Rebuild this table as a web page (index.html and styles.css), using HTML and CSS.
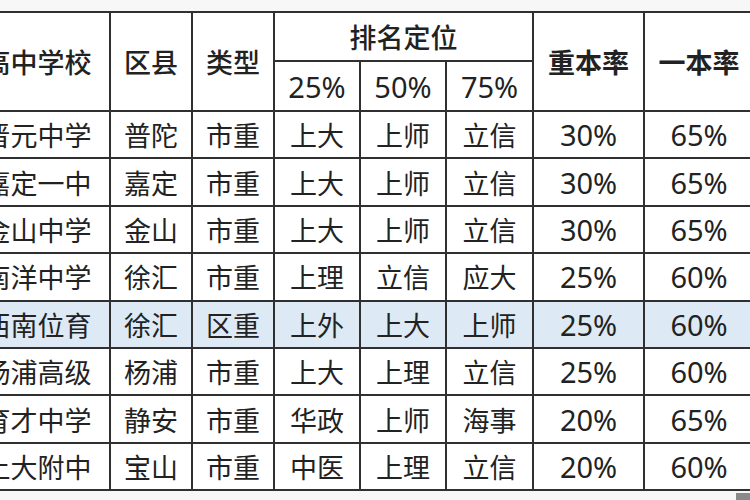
FILE: index.html
```html
<!DOCTYPE html>
<html lang="zh">
<head>
<meta charset="utf-8">
<link rel="stylesheet" href="styles.css">
</head>
<body>
<div class="page">
<table class="grid">
  <colgroup>
    <col class="c-school"><col class="c-dist"><col class="c-type">
    <col class="c-rank"><col class="c-rank"><col class="c-rank6">
    <col class="c-key"><col class="c-one">
  </colgroup>
  <thead>
    <tr class="h1">
      <th rowspan="2">高中学校</th>
      <th rowspan="2">区县</th>
      <th rowspan="2">类型</th>
      <th colspan="3">排名定位</th>
      <th rowspan="2" class="bold">重本率</th>
      <th rowspan="2" class="bold">一本率</th>
    </tr>
    <tr class="h2">
      <th class="num">25%</th>
      <th class="num">50%</th>
      <th class="num">75%</th>
    </tr>
  </thead>
  <tbody>
    <tr><td>晋元中学</td><td>普陀</td><td>市重</td><td>上大</td><td>上师</td><td>立信</td><td class="num">30%</td><td class="num">65%</td></tr>
    <tr><td>嘉定一中</td><td>嘉定</td><td>市重</td><td>上大</td><td>上师</td><td>立信</td><td class="num">30%</td><td class="num">65%</td></tr>
    <tr><td>金山中学</td><td>金山</td><td>市重</td><td>上大</td><td>上师</td><td>立信</td><td class="num">30%</td><td class="num">65%</td></tr>
    <tr><td>南洋中学</td><td>徐汇</td><td>市重</td><td>上理</td><td>立信</td><td>应大</td><td class="num">25%</td><td class="num">60%</td></tr>
    <tr class="hl"><td>西南位育</td><td>徐汇</td><td>区重</td><td>上外</td><td>上大</td><td>上师</td><td class="num">25%</td><td class="num">60%</td></tr>
    <tr><td>杨浦高级</td><td>杨浦</td><td>市重</td><td>上大</td><td>上理</td><td>立信</td><td class="num">25%</td><td class="num">60%</td></tr>
    <tr><td>育才中学</td><td>静安</td><td>市重</td><td>华政</td><td>上师</td><td>海事</td><td class="num">20%</td><td class="num">65%</td></tr>
    <tr><td>上大附中</td><td>宝山</td><td>市重</td><td>中医</td><td>上理</td><td>立信</td><td class="num">20%</td><td class="num">60%</td></tr>
  </tbody>
</table>
<div class="corner"></div>
</div>
</body>
</html>
```
FILE: styles.css
```css
html, body {
  margin: 0;
  padding: 0;
  background: #ffffff;
}
.page {
  position: relative;
  width: 750px;
  height: 500px;
  overflow: hidden;
  background: #f7f7f7;
}
.grid {
  border-collapse: collapse;
  table-layout: fixed;
  width: 789px;
  margin-left: -36px;
  margin-top: 11px;
  background: #ffffff;
  font-family: "Noto Sans CJK SC", "Noto Sans", sans-serif;
  color: #222;
  font-size: 27px;
}
.c-school { width: 145px; }
.c-dist { width: 82px; }
.c-type { width: 82px; }
.c-rank { width: 86px; }
.c-rank6 { width: 87px; }
.c-key { width: 111px; }
.c-one { width: 110px; }
.grid th, .grid td {
  border: 2px solid #303030;
  padding: 0;
  text-align: center;
  vertical-align: middle;
  line-height: 1;
  white-space: nowrap;
}
.grid th {
  font-weight: 500;
}
.grid th.bold {
  font-weight: 700;
}
.h1 th { height: 47px; }
.h2 th { height: 48px; }
.grid tbody tr { height: 47.4px; }
.grid .num {
  font-family: "Noto Sans", sans-serif;
  font-size: 29px;
  font-weight: 400;
}
.grid tr.hl td {
  background: #dde9f5;
}
.corner {
  position: absolute;
  right: 0;
  bottom: 0;
  width: 14px;
  height: 7px;
  background: #8a8a8a;
}
```
